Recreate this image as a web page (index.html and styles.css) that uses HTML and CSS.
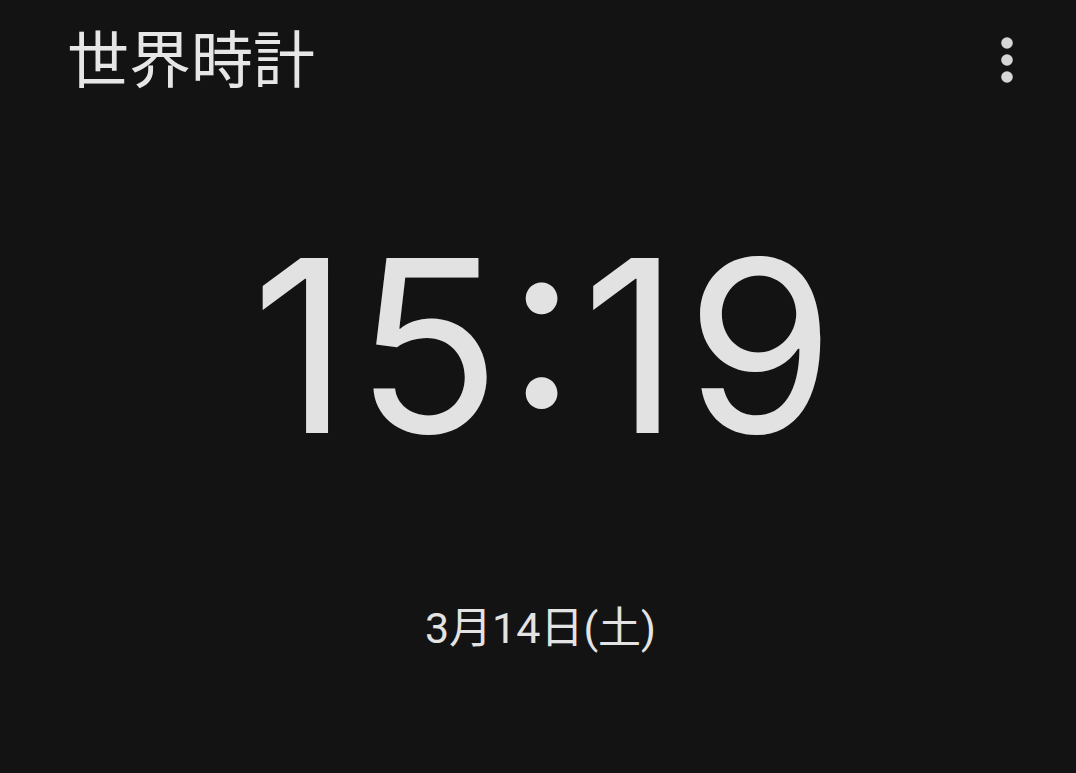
FILE: index.html
```html
<!DOCTYPE html>
<html lang="ja">
<head>
<meta charset="utf-8">
<title>世界時計</title>
<link rel="stylesheet" href="styles.css">
</head>
<body>
<div class="app">
  <header class="topbar">
    <h1 class="title">世界時計</h1>
    <button class="menu" aria-label="メニュー">
      <svg width="24" height="48" viewBox="0 0 24 48" aria-hidden="true">
        <circle cx="12" cy="7" r="5.8" fill="#d6d6d6"/>
        <circle cx="12" cy="24" r="5.8" fill="#d6d6d6"/>
        <circle cx="12" cy="41" r="5.8" fill="#d6d6d6"/>
      </svg>
    </button>
  </header>
  <main class="clock">
    <div class="time">15:19</div>
    <div class="date">3月14日(土)</div>
  </main>
</div>
</body>
</html>
```
FILE: styles.css
```css
html, body {
  margin: 0;
  padding: 0;
  background: #131313;
}
.app {
  width: 1076px;
  height: 773px;
  display: flex;
  flex-direction: column;
  color: #e3e3e3;
  font-family: "Roboto", "Noto Sans CJK JP", sans-serif;
}
.topbar {
  display: flex;
  align-items: center;
  justify-content: space-between;
  padding: 18px 57px 0 67px;
  height: 84px;
}
.title {
  margin: -9px 0 0 0;
  font-family: "Noto Sans CJK JP", sans-serif;
  font-weight: 400;
  font-size: 62px;
  line-height: 84px;
  color: #e6e6e6;
}
.menu {
  background: none;
  border: 0;
  padding: 0;
  width: 24px;
  height: 48px;
  display: flex;
}
.clock {
  display: flex;
  flex-direction: column;
  align-items: center;
}
.time {
  font-family: "Inter", "Roboto", sans-serif;
  font-weight: 400;
  font-size: 240px;
  line-height: 1;
  letter-spacing: 6px;
  padding-left: 16px;
  margin-top: 124px;
  color: #e2e2e2;
  font-feature-settings: "case" 1, "calt" 1;
}
.date {
  font-size: 43px;
  line-height: 1;
  margin-top: 141px;
  padding-left: 5px;
  color: #e3e3e3;
}
```
